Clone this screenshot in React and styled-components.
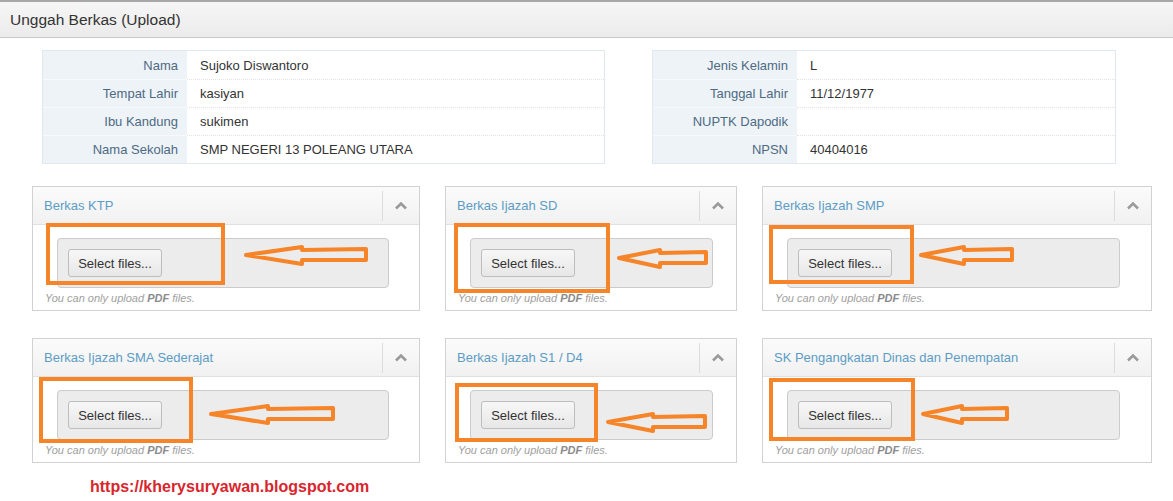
import React from "react";
import styled, { createGlobalStyle } from "styled-components";

const GlobalStyle = createGlobalStyle`
  html, body {
    margin: 0;
    padding: 0;
    background: #fff;
    font-family: "Liberation Sans", Arial, sans-serif;
  }
`;

const Page = styled.div`
  width: 1173px;
  height: 501px;
  overflow: hidden;
`;

const TitleBar = styled.div`
  height: 35px;
  border-top: 2px solid #a8a8a8;
  border-bottom: 1px solid #c9c9c9;
  background: linear-gradient(#f6f6f6, #ebebeb);
  display: flex;
  align-items: center;
  padding-left: 10px;
  font-size: 15.5px;
  color: #333;
`;

const InfoRow = styled.div`
  display: flex;
  gap: 47px;
  padding: 12px 0 0 42px;
`;

const InfoTable = styled.div`
  width: ${(p) => p.width}px;
  border: 1px solid #dfe8ef;
  box-sizing: border-box;
`;

const InfoLine = styled.div`
  display: flex;
  height: 28px;
  font-size: 13px;
  & + & > div {
    border-top: 1px dotted #e3e3e3;
  }
  & + & > div:first-child {
    border-top: 1px solid #f7f9fb;
  }
`;

const Label = styled.div`
  width: 144px;
  flex: none;
  background: #eef3f7;
  color: #4d6a85;
  padding-right: 9px;
  box-sizing: border-box;
  display: flex;
  align-items: center;
  justify-content: flex-end;
`;

const Value = styled.div`
  flex: 1;
  color: #333;
  padding-left: 13px;
  display: flex;
  align-items: center;
`;

const Grid = styled.div`
  display: grid;
  grid-template-columns: 388px 292px 390px;
  column-gap: 25px;
  row-gap: 27px;
  padding: 22px 0 0 32px;
`;

const Panel = styled.div`
  position: relative;
  height: 125px;
  border: 1px solid #d2d2d2;
  box-sizing: border-box;
  background: #fff;
`;

const PanelHead = styled.div`
  height: 37px;
  display: flex;
  align-items: center;
  background: linear-gradient(#fbfbfb, #f1f1f1);
  border-bottom: 1px solid #e0e0e0;
`;

const PanelTitle = styled.div`
  flex: 1;
  padding-left: 11px;
  font-size: 13px;
  color: #5c9cc6;
`;

const Collapse = styled.div`
  width: 36px;
  height: 30px;
  border-left: 1px solid #dcdcdc;
  display: flex;
  align-items: center;
  justify-content: center;
`;

const PanelBody = styled.div`
  padding: 13px ${(p) => p.right}px 0 24px;
`;

const DropZone = styled.div`
  height: 48px;
  border: 1px solid #cbcbcb;
  border-radius: 4px;
  background: #ececec;
  display: flex;
  align-items: center;
  padding-left: 10px;
`;

const SelectButton = styled.div`
  height: 26px;
  width: 92px;
  border: 1px solid #bdbdbd;
  border-radius: 3px;
  background: linear-gradient(#f7f7f7, #e7e7e7);
  display: flex;
  align-items: center;
  justify-content: center;
  font-size: 13px;
  color: #333;
`;

const Hint = styled.div`
  margin: 4px 0 0 -12px;
  font-size: 11px;
  font-style: italic;
  color: #a0a0a0;
  b {
    color: #8a8a8a;
  }
`;

const Mark = styled.div`
  position: absolute;
  left: ${(p) => p.x}px;
  top: ${(p) => p.y}px;
  width: ${(p) => p.w}px;
  height: ${(p) => p.h}px;
  border: 4px solid #f68428;
  box-sizing: border-box;
  pointer-events: none;
`;

const ArrowWrap = styled.svg`
  position: absolute;
  left: ${(p) => p.x}px;
  top: ${(p) => p.y}px;
  overflow: visible;
  pointer-events: none;
`;

const Footer = styled.div`
  padding: 15px 0 0 90px;
  font-size: 16px;
  font-weight: bold;
  color: #d9252d;
`;

function Chevron() {
  return (
    <svg width="14" height="9" viewBox="0 0 14 9">
      <path d="M2 7.5 L7 2.5 L12 7.5" fill="none" stroke="#9a9a9a" strokeWidth="2.6" />
    </svg>
  );
}

function Arrow({ x, y, w }) {
  const neck = Math.round(w * 0.47);
  const pts = `2,10 ${neck},2 ${neck},5 ${w - 2},4 ${w - 2},15 ${neck},15 ${neck},19`;
  return (
    <ArrowWrap x={x} y={y} width={w} height={21} viewBox={`0 0 ${w} 21`}>
      <polygon points={pts} fill="none" stroke="#f68428" strokeWidth="4" strokeLinejoin="round" />
    </ArrowWrap>
  );
}

const leftInfo = [
  ["Nama", "Sujoko Diswantoro"],
  ["Tempat Lahir", "kasiyan"],
  ["Ibu Kandung", "sukimen"],
  ["Nama Sekolah", "SMP NEGERI 13 POLEANG UTARA"],
];

const rightInfo = [
  ["Jenis Kelamin", "L"],
  ["Tanggal Lahir", "11/12/1977"],
  ["NUPTK Dapodik", ""],
  ["NPSN", "40404016"],
];

const panels = [
  { title: "Berkas KTP", right: 30, mark: [13, 36, 179, 62], arrow: [211, 58, 124] },
  { title: "Berkas Ijazah SD", right: 23, mark: [8, 36, 156, 70], arrow: [171, 61, 91] },
  { title: "Berkas Ijazah SMP", right: 31, mark: [6, 38, 145, 59], arrow: [156, 58, 95] },
  { title: "Berkas Ijazah SMA Sederajat", right: 30, mark: [6, 38, 154, 66], arrow: [176, 65, 126] },
  { title: "Berkas Ijazah S1 / D4", right: 23, mark: [9, 44, 143, 59], arrow: [160, 73, 101] },
  { title: "SK Pengangkatan Dinas dan Penempatan", right: 31, mark: [6, 39, 146, 63], arrow: [158, 65, 88] },
];

function Table({ rows, width }) {
  return (
    <InfoTable width={width}>
      {rows.map(([k, v]) => (
        <InfoLine key={k}>
          <Label>{k}</Label>
          <Value>{v}</Value>
        </InfoLine>
      ))}
    </InfoTable>
  );
}

export default function App() {
  return (
    <Page>
      <GlobalStyle />
      <TitleBar>Unggah Berkas (Upload)</TitleBar>
      <InfoRow>
        <Table rows={leftInfo} width={563} />
        <Table rows={rightInfo} width={464} />
      </InfoRow>
      <Grid>
        {panels.map((p) => (
          <Panel key={p.title}>
            <PanelHead>
              <PanelTitle>{p.title}</PanelTitle>
              <Collapse>
                <Chevron />
              </Collapse>
            </PanelHead>
            <PanelBody right={p.right}>
              <DropZone>
                <SelectButton>Select files...</SelectButton>
              </DropZone>
              <Hint>
                You can only upload <b>PDF</b> files.
              </Hint>
            </PanelBody>
            <Mark x={p.mark[0]} y={p.mark[1]} w={p.mark[2]} h={p.mark[3]} />
            <Arrow x={p.arrow[0]} y={p.arrow[1]} w={p.arrow[2]} />
          </Panel>
        ))}
      </Grid>
      <Footer>https://kherysuryawan.blogspot.com</Footer>
    </Page>
  );
}
